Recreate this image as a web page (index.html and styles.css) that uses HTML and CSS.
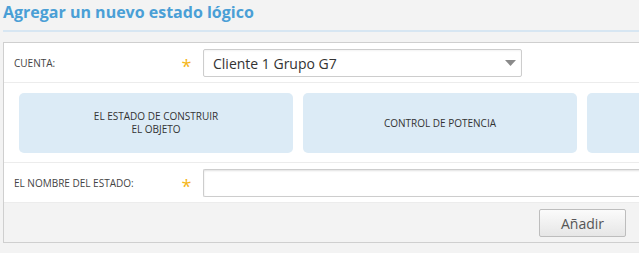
FILE: index.html
```html
<!DOCTYPE html>
<html lang="es">
<head>
<meta charset="utf-8">
<title>Agregar un nuevo estado lógico</title>
<link rel="stylesheet" href="styles.css">
</head>
<body>
<div class="page">
  <h1 class="title">Agregar un nuevo estado lógico</h1>
  <div class="panel">
    <div class="row">
      <div class="label">CUENTA:</div>
      <div class="req">*</div>
      <div class="field">
        <div class="select">
          <span class="select-text">Cliente 1 Grupo G7</span>
          <svg class="arrow" width="11" height="6" viewBox="0 0 11 6"><path d="M0 0H11L5.5 6Z" fill="#8a8a8a"/></svg>
        </div>
      </div>
    </div>
    <div class="cards">
      <div class="card">EL ESTADO DE CONSTRUIR<br>EL OBJETO</div>
      <div class="card">CONTROL DE POTENCIA</div>
      <div class="card"></div>
    </div>
    <div class="row">
      <div class="label">EL NOMBRE DEL ESTADO:</div>
      <div class="req">*</div>
      <div class="field">
        <input class="input" type="text">
      </div>
    </div>
    <div class="footer">
      <button class="btn" type="button">Añadir</button>
    </div>
  </div>
</div>
</body>
</html>
```
FILE: styles.css
```css
html, body {
  margin: 0;
  padding: 0;
  background: #f3f3f3;
  overflow: hidden;
  font-family: "Open Sans", "Liberation Sans", sans-serif;
}
.page {
  padding-left: 3px;
  width: 660px;
}
.title {
  margin: 0;
  font-size: 16px;
  line-height: 22px;
  font-weight: 700;
  color: #4a9fd6;
  padding-top: 1px;
  padding-bottom: 7px;
  border-bottom: 2px solid #d7e6f2;
  width: 636px;
}
.panel {
  margin-top: 10px;
  border: 1px solid #cfcfcf;
  border-right: none;
  background: #fff;
}
.row {
  display: grid;
  grid-template-columns: 166px 33px 1fr;
  align-items: center;
  height: 39px;
  border-bottom: 1px solid #ececec;
}
.label {
  padding-left: 10px;
  font-size: 10px;
  color: #444;
}
.req {
  color: #f5b61a;
  font-size: 18px;
  line-height: 1;
  text-align: center;
  padding-top: 6px;
}
.select {
  width: 303px;
  height: 26px;
  border: 1px solid #cdcdcd;
  border-radius: 2px;
  box-shadow: inset 0 1px 2px rgba(0,0,0,0.05);
  display: flex;
  align-items: center;
  justify-content: space-between;
  padding: 0 5px 0 9px;
  box-sizing: content-box;
  margin-top: 1px;
}
.select-text {
  font-size: 14px;
  color: #333;
}
.cards {
  display: flex;
  gap: 10px;
  padding: 10px 0 9px 15px;
  border-bottom: 1px solid #ececec;
  overflow: hidden;
}
.card {
  flex: 0 0 274px;
  height: 60px;
  background: #dcebf6;
  border-radius: 5px;
  display: flex;
  align-items: center;
  justify-content: center;
  text-align: center;
  font-size: 10px;
  line-height: 13px;
  color: #333;
}
.input {
  display: block;
  width: 100%;
  height: 28px;
  box-sizing: border-box;
  border: 1px solid #cdcdcd;
  border-right: none;
  border-radius: 2px 0 0 2px;
  box-shadow: inset 0 1px 2px rgba(0,0,0,0.12);
  margin: 0;
  padding: 0 8px;
  font-family: inherit;
  font-size: 14px;
  background: #fff;
}
.footer {
  background: #f3f3f3;
  height: 39px;
  display: flex;
  justify-content: flex-start;
  align-items: center;
  padding-left: 535px;
}
.btn {
  width: 87px;
  height: 28px;
  border: 1px solid #bdbdbd;
  border-radius: 2px;
  background: linear-gradient(#fbfbfb, #e6e6e6);
  font-family: inherit;
  font-size: 14px;
  color: #555;
  padding: 0;
  margin-top: 1px;
}
```
